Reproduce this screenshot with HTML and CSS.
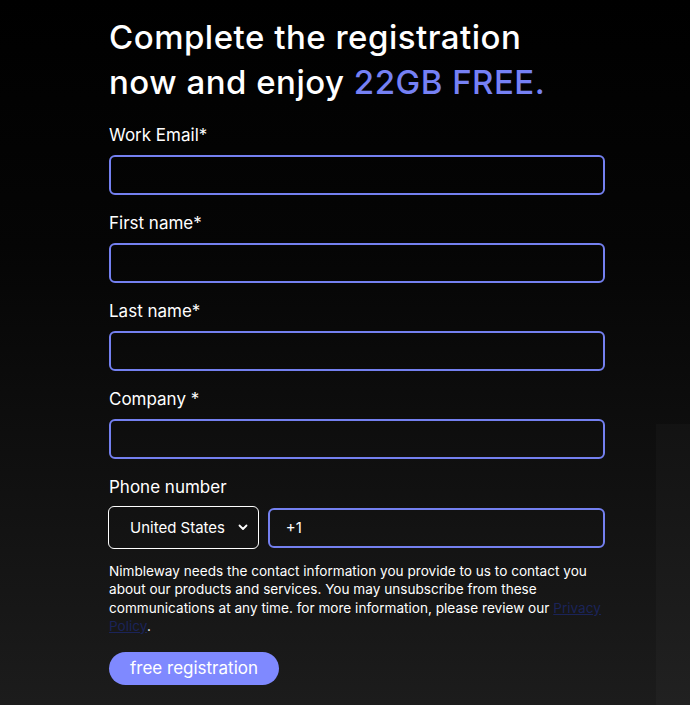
FILE: index.html
```html
<!DOCTYPE html>
<html lang="en">
<head>
<meta charset="utf-8">
<title>Complete the registration</title>
<link rel="stylesheet" href="styles.css">
</head>
<body>
<main class="page">
  <form class="form" onsubmit="return false">
    <h1 class="title">Complete the registration now and enjoy <span class="accent">22GB FREE.</span></h1>

    <div class="field">
      <label class="label" for="email">Work Email*</label>
      <input class="input" id="email" type="email">
    </div>
    <div class="field">
      <label class="label" for="first">First name*</label>
      <input class="input" id="first" type="text">
    </div>
    <div class="field">
      <label class="label" for="last">Last name*</label>
      <input class="input" id="last" type="text">
    </div>
    <div class="field">
      <label class="label" for="company">Company *</label>
      <input class="input" id="company" type="text">
    </div>
    <div class="field field-phone">
      <label class="label" for="phone">Phone number</label>
      <div class="phone-row">
        <div class="select">
          <span class="select-text">United States</span>
          <svg class="chevron" width="10" height="7" viewBox="0 0 10 7"><path d="M1.5 1.5 L5 5 L8.5 1.5" fill="none" stroke="#fff" stroke-width="1.8" stroke-linecap="round" stroke-linejoin="round"/></svg>
        </div>
        <input class="input phone-input" id="phone" type="tel" value="+1">
      </div>
    </div>

    <p class="notice">Nimbleway needs the contact information you provide to us to contact you about our products and services. You may unsubscribe from these communications at any time. for more information, please review our <a class="link" href="#">Privacy Policy</a>.</p>

    <button class="btn" type="submit">free registration</button>
  </form>
</main>
</body>
</html>
```

FILE: styles.css
```css
* { box-sizing: border-box; }
html, body { margin: 0; padding: 0; }
body {
  min-height: 705px;
  background: linear-gradient(180deg, #000 0%, #050505 35%, #111 70%, #1c1c1c 100%);
  font-family: "Inter", "Noto Sans", sans-serif;
  color: #fff;
  position: relative;
  overflow: hidden;
}
body::after {
  content: "";
  position: absolute;
  left: 656px;
  top: 424px;
  width: 40px;
  height: 300px;
  background: rgba(255,255,255,0.025);
}
.page {
  padding-left: 109px;
  width: 605px;
}
.form {
  display: flex;
  flex-direction: column;
}
.title {
  margin: 15px 0 0;
  font-size: 33px;
  line-height: 45px;
  font-weight: 500;
  letter-spacing: 0.5px;
  color: #fff;
  width: 460px;
}
.accent { color: #7681f5; }
.field {
  display: flex;
  flex-direction: column;
  margin-top: 16px;
}
.title + .field { margin-top: 18px; }
.label {
  font-size: 17px;
  line-height: 24px;
  font-weight: 400;
  color: #fff;
}
.input {
  margin-top: 8px;
  width: 496px;
  height: 40px;
  background: transparent;
  border: 2px solid #7480f0;
  border-radius: 6px;
  color: #fff;
  font-family: inherit;
  font-size: 14px;
  padding: 0 16px;
  outline: none;
}
.field-phone .label { margin-bottom: 7px; }
.phone-row {
  display: flex;
  align-items: center;
  gap: 9px;
  margin-left: -1px;
}
.select {
  width: 151px;
  height: 43px;
  border: 1px solid #fff;
  border-radius: 6px;
  display: flex;
  align-items: center;
  padding-left: 21px;
  padding-right: 8px;
  gap: 12px;
}
.select-text {
  font-size: 15px;
  color: #fff;
}
.chevron { margin-left: auto; margin-right: 2px; }
.phone-input {
  margin-top: 0;
  width: 338px;
  font-size: 15px;
}
.notice {
  margin: 13px 0 0;
  width: 496px;
  font-size: 13.6px;
  line-height: 18.4px;
  color: #fff;
}
.link {
  color: #1b2459;
  text-decoration: underline;
}
.btn {
  margin-top: 16px;
  width: 170px;
  height: 33px;
  border: none;
  border-radius: 17px;
  background: #7f89ff;
  color: #fff;
  font-family: inherit;
  font-size: 17px;
  padding: 0;
  cursor: pointer;
}
```
